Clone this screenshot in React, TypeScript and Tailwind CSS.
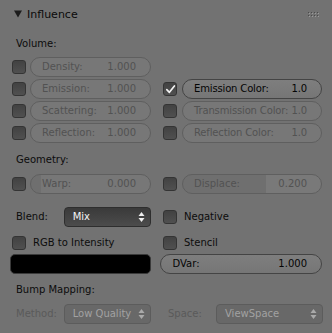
import React from 'react';

type FieldProps = {
  label: string;
  value: string;
  on?: boolean;
  className: string;
};

// little blender style checkbox
function Check({ on }: { on?: boolean }) {
  return (
    <div className="w-[14px] h-[14px] shrink-0 rounded-[3px] border border-[#343434] bg-gradient-to-b from-[#424242] to-[#505050] flex items-center justify-center">
      {on && (
        <svg width="11" height="11" viewBox="0 0 11 11">
          <path d="M1.8 5.6 L4.4 8.3 L9.4 2" stroke="#f2f2f2" strokeWidth="1.7" fill="none" strokeLinecap="round" strokeLinejoin="round" />
        </svg>
      )}
    </div>
  );
}

function NumField({ label, value, on, className }: FieldProps) {
  return (
    <div
      className={`h-[20px] rounded-full border flex items-center justify-between gap-[3px] pl-[11px] pr-[14px] whitespace-nowrap ${
        on ? 'border-[#444444] text-[#050505]' : 'border-[#5f5f5f] text-[#525252]'
      } ${className}`}
    >
      <span>{label}</span>
      <span>{value}</span>
    </div>
  );
}

function Arrows({ color }: { color: string }) {
  return (
    <svg width="7" height="12" viewBox="0 0 7 12" className="shrink-0">
      <path d="M3.5 1 L6.5 5 L0.5 5 Z" fill={color} />
      <path d="M3.5 11 L6.5 7 L0.5 7 Z" fill={color} />
    </svg>
  );
}

function Dropdown({ value, off, className }: { value: string; off?: boolean; className: string }) {
  return (
    <div
      className={`h-[20px] rounded-[4px] border flex items-center justify-between pl-[8px] pr-[5px] ${
        off
          ? 'border-[#5c5c5c] bg-[#686868] text-[#a2a2a2]'
          : 'border-[#2e2e2e] bg-gradient-to-b from-[#3a3a3a] to-[#4c4c4c] text-[#f4f4f4]'
      } ${className}`}
    >
      <span>{value}</span>
      <Arrows color={off ? '#aaaaaa' : '#eeeeee'} />
    </div>
  );
}

function Label({ children, className = '' }: { children: React.ReactNode; className?: string }) {
  return <div className={`h-[16px] flex items-center pl-[6px] text-[#0c0c0c] ${className}`}>{children}</div>;
}

const rows: [string, string, boolean, string, string, boolean, boolean][] = [
  ['Density:', '1.000', false, '', '', false, false],
  ['Emission:', '1.000', false, 'Emission Color:', '1.0', true, true],
  ['Scattering:', '1.000', false, 'Transmission Color:', '1.0', false, false],
  ['Reflection:', '1.000', false, 'Reflection Color:', '1.0', false, false],
];

export default function App() {
  return (
    <div className="w-[332px] h-[333px] overflow-hidden bg-[#727272] font-['DejaVu_Sans',sans-serif] text-[10px] leading-none px-[10px]">
      {/* header */}
      <div className="h-[28px] flex items-center justify-between pl-[4px] pr-[2px]">
        <div className="flex items-center gap-[5px] text-[11px] text-[#0a0a0a]">
          <svg width="8" height="8" viewBox="0 0 8 8">
            <path d="M0 0.5 L8 0.5 L4 7.5 Z" fill="#1c1c1c" />
          </svg>
          <span>Influence</span>
        </div>
        <svg width="12" height="5" viewBox="0 0 12 5">
          {[0, 3, 6, 9].map((x) =>
            [0, 3].map((y) => (
              <g key={`${x}-${y}`}>
                <rect x={x + 1} y={y + 1} width="1" height="1" fill="#9a9a9a" />
                <rect x={x} y={y} width="1" height="1" fill="#4a4a4a" />
              </g>
            ))
          )}
        </svg>
      </div>

      <Label className="mt-[8px]">Volume:</Label>

      <div className="mt-[5px] flex flex-col gap-[2px]">
        {rows.map(([l, v, lo, r, rv, ro, rc]) => (
          <div key={l} className="h-[20px] flex items-center">
            <div className="w-[141px] flex items-center gap-[4px] pl-[2px]">
              <Check />
              <NumField label={l} value={v} on={lo} className="w-[121px] bg-[#777777]" />
            </div>
            {r && (
              <div className="ml-[9px] flex items-center gap-[5px] pl-[3px]">
                <Check on={rc} />
                <NumField
                  label={r}
                  value={rv}
                  on={ro}
                  className={`w-[140px] tracking-[-0.15px] ${ro ? 'bg-gradient-to-b from-[#7e7e7e] to-[#767676]' : 'bg-[#777777]'}`}
                />
              </div>
            )}
          </div>
        ))}
      </div>

      <Label className="mt-[9px]">Geometry:</Label>

      <div className="mt-[6px] h-[20px] flex items-center">
        <div className="w-[141px] flex items-center gap-[4px] pl-[2px]">
          <Check />
          <NumField label="Warp:" value="0.000" className="w-[121px] bg-[linear-gradient(to_right,#6f6f6f_8%,#777777_8%)]" />
        </div>
        <div className="ml-[9px] flex items-center gap-[5px] pl-[3px]">
          <Check />
          <NumField label="Displace:" value="0.200" className="w-[140px] bg-[linear-gradient(to_right,#6f6f6f_60%,#797979_60%)]" />
        </div>
      </div>

      <div className="mt-[13px] h-[20px] flex items-center">
        <div className="w-[141px] flex items-center">
          <span className="w-[48px] pl-[6px] text-[#0c0c0c]">Blend:</span>
          <Dropdown value="Mix" className="w-[88px] ml-[6px]" />
        </div>
        <div className="ml-[9px] pl-[3px] flex items-center gap-[7px] text-[#0c0c0c]">
          <Check />
          <span>Negative</span>
        </div>
      </div>

      <div className="mt-[6px] h-[20px] flex items-center">
        <div className="w-[141px] pl-[2px] flex items-center gap-[7px] text-[#0c0c0c]">
          <Check />
          <span>RGB to Intensity</span>
        </div>
        <div className="ml-[9px] pl-[3px] flex items-center gap-[7px] text-[#0c0c0c]">
          <Check />
          <span>Stencil</span>
        </div>
      </div>

      <div className="mt-[1px] h-[20px] flex items-center">
        <div className="w-[141px] h-[20px] rounded-[5px] border border-[#3a3a3a] bg-black" />
        <NumField label="DVar:" value="1.000" on className="ml-[9px] w-[163px] pl-[12px] bg-gradient-to-b from-[#7e7e7e] to-[#767676]" />
      </div>

      <Label className="mt-[8px]">Bump Mapping:</Label>

      <div className="mt-[6px] h-[20px] flex items-center">
        <div className="w-[141px] flex items-center">
          <span className="w-[48px] pl-[6px] text-[#5a5a5a]">Method:</span>
          <Dropdown value="Low Quality" off className="w-[88px] ml-[6px]" />
        </div>
        <div className="ml-[9px] flex items-center">
          <span className="w-[56px] pl-[8px] text-[#5a5a5a]">Space:</span>
          <Dropdown value="ViewSpace" off className="w-[107px]" />
        </div>
      </div>
    </div>
  );
}
